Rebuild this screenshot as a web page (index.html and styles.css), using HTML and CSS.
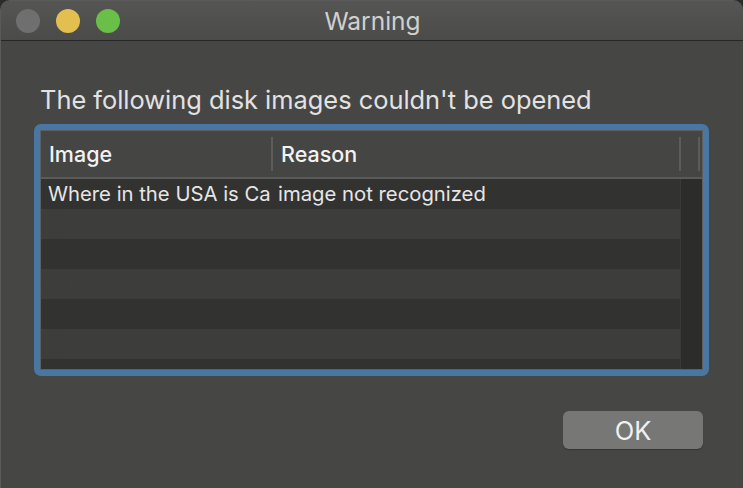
FILE: index.html
```html
<!DOCTYPE html>
<html>
<head>
<meta charset="utf-8">
<link rel="stylesheet" href="styles.css">
</head>
<body>
<div class="window">
  <div class="titlebar">
    <div class="lights">
      <span class="light gray"></span>
      <span class="light yellow"></span>
      <span class="light green"></span>
    </div>
    <div class="title">Warning</div>
  </div>
  <div class="content">
    <div class="heading">The following disk images couldn't be opened</div>
    <div class="ring">
      <div class="table">
        <div class="thead">
          <div class="th col-image">Image</div>
          <div class="th col-reason">Reason</div>
          <div class="th col-scroll"></div>
        </div>
        <div class="tbody">
          <div class="rows">
            <div class="row dark"><div class="cell col-image">Where in the USA is Carmen Sandiego</div><div class="cell col-reason">image not recognized</div></div>
            <div class="row light"></div>
            <div class="row dark"></div>
            <div class="row light"></div>
            <div class="row dark"></div>
            <div class="row light"></div>
            <div class="row dark"></div>
          </div>
          <div class="scrollbar"></div>
        </div>
      </div>
    </div>
    <div class="actions">
      <button class="ok">OK</button>
    </div>
  </div>
</div>
</body>
</html>
```

FILE: styles.css
```css
html, body {
  margin: 0;
  padding: 0;
  background: #2b2b2b;
}
body {
  width: 743px;
  height: 488px;
  overflow: hidden;
  font-family: Inter, "Noto Sans", "Liberation Sans", sans-serif;
}
.window {
  width: 743px;
  height: 488px;
  background: #464645;
  border-radius: 10px 10px 0 0;
  box-sizing: border-box;
  border-left: 1px solid #5a5a5a;
  border-top: 1px solid #5a5a5a;
  overflow: hidden;
}
.titlebar {
  height: 39px;
  background: linear-gradient(#555554, #4b4b4a);
  border-bottom: 1px solid #262626;
  display: flex;
  align-items: center;
  position: relative;
}
.lights {
  display: flex;
  gap: 16px;
  padding-left: 15px;
}
.light {
  width: 24px;
  height: 24px;
  border-radius: 50%;
  display: block;
}
.gray { background: #6f6f6f; }
.yellow { background: #e2bf4f; }
.green { background: #6abf49; }
.title {
  position: absolute;
  left: 0;
  right: 0;
  top: 0;
  bottom: 0;
  display: flex;
  align-items: center;
  justify-content: center;
  color: #d0d0d0;
  font-size: 24.5px;
  padding-left: 1px;
}
.content {
  padding: 0 0 0 33px;
}
.heading {
  margin-top: 43px;
  padding-left: 6px;
  color: #e2e2e2;
  font-size: 25.4px;
  line-height: 32px;
  height: 32px;
}
.ring {
  margin-top: 8px;
  width: 675px;
  height: 252px;
  box-sizing: border-box;
  border: 6px solid #4a76a3;
  border-radius: 7px;
  background: #4a76a3;
}
.table {
  width: 663px;
  height: 240px;
  box-sizing: border-box;
  border: 1px solid #5f5f5f;
  background: #3d3d3c;
  overflow: hidden;
  display: flex;
  flex-direction: column;
}
.thead {
  height: 46px;
  flex: none;
  display: flex;
  align-items: center;
  background: #454544;
  border-bottom: 2px solid #5a5a5a;
}
.th {
  color: #f2f2f2;
  font-size: 21.5px;
  font-weight: 500;
  height: 34px;
  line-height: 34px;
  box-sizing: border-box;
}
.col-image {
  width: 230px;
  padding-left: 8px;
  box-sizing: border-box;
  white-space: nowrap;
  overflow: hidden;
}
.th.col-reason {
  width: 408px;
  border-left: 2px solid #5c5c5c;
  padding-left: 8px;
}
.th.col-scroll {
  width: 21px;
  border-left: 2px solid #5c5c5c;
  border-right: 2px solid #5c5c5c;
}
.tbody {
  flex: 1;
  display: flex;
  overflow: hidden;
}
.rows {
  width: 639px;
  flex: none;
}
.row {
  height: 30px;
  display: flex;
  align-items: center;
}
.row.dark { background: #323231; }
.row.light { background: #3d3d3c; }
.cell {
  color: #e6e6e6;
  font-size: 20.3px;
  line-height: 30px;
  white-space: nowrap;
}
.cell.col-image {
  padding-left: 7px;
}
.cell.col-reason {
  padding-left: 7px;
}
.scrollbar {
  flex: 1;
  background: #2c2c2b;
  border-left: 1px solid #3a3a3a;
}
.actions {
  display: flex;
  justify-content: flex-end;
  padding-right: 40px;
  margin-top: 35px;
}
.ok {
  width: 140px;
  height: 38px;
  border: none;
  border-radius: 6px;
  background: #777776;
  color: #f0f0f0;
  font-family: inherit;
  font-size: 25.5px;
  padding: 0;
  box-shadow: 0 1px 1px rgba(0,0,0,0.25);
}
```
